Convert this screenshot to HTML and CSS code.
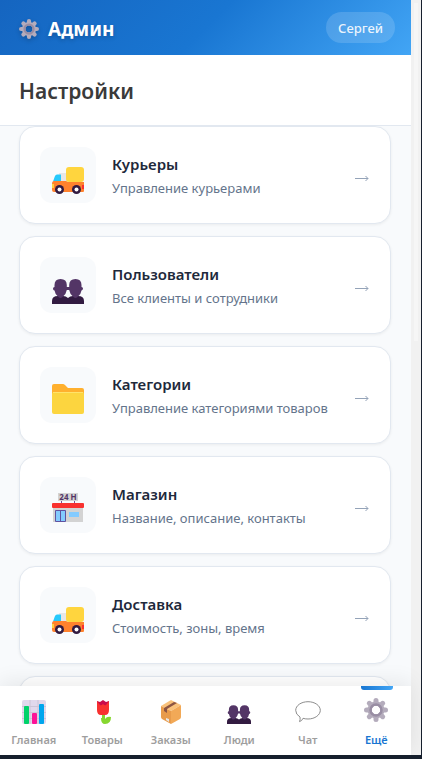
FILE: index.html
```html
<!DOCTYPE html>
<html lang="ru">
<head>
<meta charset="utf-8">
<meta name="viewport" content="width=device-width, initial-scale=1">
<title>Админ</title>
<link rel="stylesheet" href="styles.css">
</head>
<body>
<svg class="sprite" aria-hidden="true">
  <symbol id="truck" viewBox="0 0 32 27" preserveAspectRatio="xMidYMax meet">
    <path fill="#e6e6e8" d="M7 6h9v10H6z"/>
    <path fill="#26c9fc" d="M5 7.500h4v7H1l2-5.500q.6-1.500 2-1.500z"/>
    <path fill="#ff822d" d="M2 14h12l2 1h16v9q0 1-1 1H2q-2 0-2-2v-6q0-3 2-3z"/>
    <path fill="#ffd23f" d="M0 17h2v4H0z"/><path fill="#f8312f" d="M30 18h2v4h-2z"/>
    <rect x="14" width="18" height="15" rx="3" fill="#ffd53e"/>
    <circle cx="7.500" cy="22.500" r="4.500" fill="#321b41"/><circle cx="7.500" cy="22.500" r="2" fill="#fff"/>
    <circle cx="24.500" cy="22.500" r="4.500" fill="#321b41"/><circle cx="24.500" cy="22.500" r="2" fill="#fff"/>
  </symbol>
  <symbol id="people" viewBox="0 0 32 25" preserveAspectRatio="xMidYMax meet">
    <path fill="#321b41" d="M0 25v-3q0-5 6-5h5q3 0 5 2 2-2 5-2h5q6 0 6 5v3z"/>
    <path fill="#533566" d="M2.500 6Q2.500 0 8.500 0q6.300 0 6.300 6v2h2.400V6q0-6 6.300-6 6 0 6 6v2q1.500 0 1.500 1.500T29.500 11.500q-.8 4-3 5.500-3 4-6 0-2.300-1.500-3.300-6h-2.400q-1 4.500-3.300 6-3 4-6 0-2.200-1.500-3-5.500Q1 11.500 1 9.500 1 8 2.500 8z"/>
  </symbol>
  <symbol id="folder" viewBox="0 0 32 30" preserveAspectRatio="xMidYMax meet">
    <path fill="#ffb02e" d="M2 0h9q1 0 2 1l3 3h14q2 0 2 2v12H0V2q0-2 2-2z"/>
    <rect y="8" width="32" height="22" rx="2" fill="#fcd53f"/>
    <path stroke="#ffe36b" d="M1 8.500h30"/>
  </symbol>
  <symbol id="gear" viewBox="0 0 24 24">
    <g fill="none" stroke="#b4acbc" stroke-width="5" stroke-linecap="round">
      <path d="M12 2.500v3M12 18.500v3M2.500 12h3M18.500 12h3M5.300 5.300l2 2M16.700 16.700l2 2M18.700 5.300l-2 2M7.300 16.700l-2 2"/>
      <circle cx="12" cy="12" r="6.500" stroke-width="4"/>
    </g>
    <circle cx="12" cy="12" r="5.500" fill="none" stroke="#998ea4" stroke-width="2.500"/>
  </symbol>
  <symbol id="chart" viewBox="0 0 24 24">
    <rect width="24" height="24" rx="2" fill="#e1d8ec"/>
    <path stroke="#cdc4d6" fill="none" d="M0 6.500h24M0 12.500h24M0 18.500h24M8 0v24M16 0v24"/>
    <rect x="2" y="6" width="5" height="18" rx="1" fill="#00d26a"/>
    <rect x="10" y="13" width="5" height="11" rx="1" fill="#fc1397"/>
    <rect x="17" y="4" width="5" height="20" rx="1" fill="#00a6ed"/>
  </symbol>
  <symbol id="tulip" viewBox="0 0 24 24">
    <path fill="#ca0b4a" d="M7 1l3 1 3-2 3 2 3-1v7H7z"/>
    <path fill="#f8312f" d="M7 1l3 4q1 1 3-1 2 2 3 1l3-4v9q0 5-4 5h-4q-4 0-4-5z"/>
    <path fill="#86d72f" d="M12 15h3v4q2-3 6-2 0 7-6 7-4 0-4-6h1z"/>
  </symbol>
  <symbol id="box" viewBox="0 0 24 24">
    <path fill="#f9c27b" d="M12 0l10 5-10 6L2 6z"/>
    <path fill="#e89b4b" d="M2 6l10 5v13L3 19q-1-1-1-2z"/>
    <path fill="#f2a957" d="M12 11l10-6v12q0 1-1 2l-9 5z"/>
    <path fill="#8c5543" d="M5 8l10-6 3 1L8 9v4l-3-2z"/>
    <path fill="#e6e6e6" d="M7 18l3 1v3l-3-2z"/>
  </symbol>
  <symbol id="chat" viewBox="0 0 26 22">
    <path fill="#fff" stroke="#8d8d8d" d="M13 .7c7 0 12.300 4 12.300 8.600S20 18 13 18q-3 0-5-.7Q7 20 4.500 20.600q1-2 .5-4.600Q.7 13.500.7 9.300C.7 4.700 6 .7 13 .7z"/>
  </symbol>
  <symbol id="arrow" viewBox="0 0 14 8">
    <path fill="none" stroke="#94a3b8" d="M0 4.500h13M10.500 2l2.500 2.500L10.500 7"/>
  </symbol>
</svg>

<div class="viewport">
  <div class="app">
    <header class="topbar">
      <div class="brand"><svg class="brand-icon" aria-hidden="true"><use href="#gear"/></svg><span>Админ</span></div>
      <button class="user" type="button">Сергей</button>
    </header>
    <div class="page-head"><h1>Настройки</h1></div>
    <main class="content">
      <a class="card" href="#couriers">
        <span class="tile"><svg class="tile-icon" aria-hidden="true"><use href="#truck"/></svg></span>
        <span class="card-text"><strong>Курьеры</strong><span>Управление курьерами</span></span>
        <svg class="arrow" aria-hidden="true"><use href="#arrow"/></svg>
      </a>
      <a class="card" href="#users">
        <span class="tile"><svg class="tile-icon" aria-hidden="true"><use href="#people"/></svg></span>
        <span class="card-text"><strong>Пользователи</strong><span>Все клиенты и сотрудники</span></span>
        <svg class="arrow" aria-hidden="true"><use href="#arrow"/></svg>
      </a>
      <a class="card" href="#categories">
        <span class="tile"><svg class="tile-icon" aria-hidden="true"><use href="#folder"/></svg></span>
        <span class="card-text"><strong>Категории</strong><span>Управление категориями товаров</span></span>
        <svg class="arrow" aria-hidden="true"><use href="#arrow"/></svg>
      </a>
      <a class="card" href="#shop-info">
        <span class="tile">
          <svg class="tile-icon" viewBox="0 0 32 32" aria-hidden="true">
            <path fill="#d3d3d3" d="M1 15h30v15H1zM6 1h20v8H6z"/>
            <path stroke="#7d4f90" d="M9.500 9v2M22.500 9v2"/>
            <text x="16" y="8" class="shop-sign">24 H</text>
            <rect y="11" width="32" height="5" rx="1" fill="#f8312f"/>
            <path fill="#83cbff" stroke="#6052a0" d="M3.500 18.500h10v11h-10zM8.500 18.500v11"/>
            <path fill="#83cbff" d="M17 20h10v5H17z"/>
          </svg>
        </span>
        <span class="card-text"><strong>Магазин</strong><span>Название, описание, контакты</span></span>
        <svg class="arrow" aria-hidden="true"><use href="#arrow"/></svg>
      </a>
      <a class="card" href="#delivery">
        <span class="tile"><svg class="tile-icon" aria-hidden="true"><use href="#truck"/></svg></span>
        <span class="card-text"><strong>Доставка</strong><span>Стоимость, зоны, время</span></span>
        <svg class="arrow" aria-hidden="true"><use href="#arrow"/></svg>
      </a>
      <div class="card"></div>
    </main>
    <nav class="tabs">
      <a class="tab" href="#home"><svg class="tab-icon" aria-hidden="true"><use href="#chart"/></svg>Главная</a>
      <a class="tab" href="#goods"><svg class="tab-icon" aria-hidden="true"><use href="#tulip"/></svg>Товары</a>
      <a class="tab" href="#orders"><svg class="tab-icon" aria-hidden="true"><use href="#box"/></svg>Заказы</a>
      <a class="tab" href="#people-list"><svg class="tab-icon" aria-hidden="true"><use href="#people"/></svg>Люди</a>
      <a class="tab" href="#chat-list"><svg class="tab-icon wide" aria-hidden="true"><use href="#chat"/></svg>Чат</a>
      <a class="tab active" href="#more"><svg class="tab-icon" aria-hidden="true"><use href="#gear"/></svg>Ещё</a>
    </nav>
  </div>
  <div class="scroll-track"><div class="scroll-thumb"></div></div>
</div>
</body>
</html>
```
FILE: styles.css
```css
* {
  box-sizing: border-box;
}

body {
  margin: 0;
  font-family: "Noto Sans", "Open Sans", sans-serif;
  background: #17202e;
}

a {
  color: inherit;
  text-decoration: none;
}

.sprite {
  position: absolute;
  width: 0;
  height: 0;
}

.shop-sign {
  font: bold 8px "Noto Sans", sans-serif;
  fill: #533566;
  text-anchor: middle;
}

.viewport {
  display: flex;
  height: 100vh;
  padding: 0 1px 4px 0;
}

.app {
  flex: 1;
  min-width: 0;
  display: flex;
  flex-direction: column;
  background: #f8fafc;
}

.topbar {
  display: flex;
  align-items: center;
  justify-content: space-between;
  padding: 12px 16px 12px 19px;
  background: linear-gradient(135deg, #1565c0 0%, #1976d2 50%, #42a5f5 100%);
  color: #fff;
}

.brand {
  display: flex;
  align-items: center;
  gap: 9px;
  padding-top: 2px;
  font-size: 19px;
  line-height: 24px;
  font-weight: 700;
  text-shadow: 0 2px 4px rgba(0, 0, 0, 0.2);
}

.brand-icon {
  width: 20px;
  height: 20px;
  filter: drop-shadow(0 2px 2px rgba(0, 0, 0, 0.2));
}

.user {
  border: 0;
  border-radius: 16px;
  padding: 7px 12px 5px;
  font: 500 13px/19px "Noto Sans", "Open Sans", sans-serif;
  color: rgba(255, 255, 255, 0.9);
  background: rgba(255, 255, 255, 0.15);
}

.page-head {
  padding: 21px 19px 19px;
  background: #fff;
  border-bottom: 1px solid #e2e8f0;
}

h1 {
  margin: 0;
  font-size: 21px;
  line-height: 30px;
  font-weight: 600;
  color: #3a3a3a;
}

.content {
  flex: 1;
  min-height: 0;
  overflow: hidden;
  display: flex;
  flex-direction: column;
  gap: 12px;
  padding: 0 20px 0 19px;
}

.card {
  flex: none;
  display: flex;
  align-items: center;
  gap: 16px;
  min-height: 98px;
  padding: 20px;
  background: #fff;
  border: 1px solid #e2e8f0;
  border-radius: 16px;
  box-shadow: 0 1px 3px rgba(0, 0, 0, 0.06);
}

.tile {
  width: 56px;
  height: 56px;
  padding-bottom: 9px;
  display: flex;
  align-items: flex-end;
  justify-content: center;
  border-radius: 12px;
  background: #f8fafc;
}

.tile-icon {
  width: 32px;
  height: 32px;
}

.card-text {
  flex: 1;
  min-width: 0;
  display: flex;
  flex-direction: column;
  padding-top: 2px;
  font-size: 13px;
  line-height: 24px;
  color: #64748b;
}

.card-text strong {
  font-size: 15px;
  font-weight: 600;
  color: #1e293b;
}

.arrow {
  width: 14px;
  height: 8px;
  margin: 6px 1px 0 0;
}

.tabs {
  position: relative;
  display: grid;
  grid-template-columns: repeat(6, 1fr);
  background: #fff;
  box-shadow: 0 -4px 20px rgba(0, 0, 0, 0.08);
}

.tab {
  position: relative;
  display: flex;
  flex-direction: column;
  align-items: center;
  gap: 8px;
  padding: 14px 1px 7px 0;
  font-size: 11px;
  line-height: 16px;
  font-weight: 600;
  color: #9e9e9e;
}

.tab-icon {
  width: 24px;
  height: 24px;
}

.tab-icon.wide {
  width: 26px;
}

.tab.active {
  gap: 10px;
  padding-top: 12px;
  color: #1976d2;
}

.tab.active::before {
  content: "";
  position: absolute;
  top: 0;
  left: calc(50% - 16px);
  width: 32px;
  height: 4px;
  border-radius: 0 0 3px 3px;
  background: linear-gradient(90deg, #1976d2, #42a5f5);
}

.scroll-track {
  width: 10px;
  padding: 3px 3px 0;
  background: #f1f1f1;
}

.scroll-thumb {
  height: 45%;
  background: #f6f6f6;
}
```
